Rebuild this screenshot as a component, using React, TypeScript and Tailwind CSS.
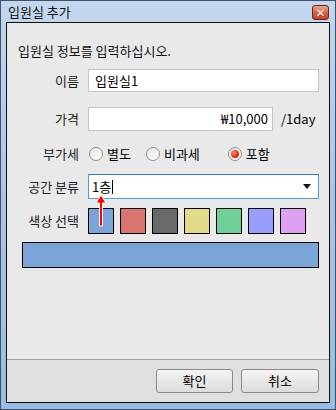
import React from "react";

const font = { fontFamily: '"Noto Sans CJK KR", "Noto Sans", sans-serif' };

const swatches = ["#7ba4d8", "#db7371", "#696969", "#e2dc8a", "#6fd09a", "#9b9dfd", "#dea0f0"];

function Radio({ checked, label }: { checked?: boolean; label: string }) {
  return (
    <div className="flex items-center gap-[4px]">
      <span className="flex h-[14px] w-[14px] items-center justify-center rounded-full border border-[#8e8f8f] bg-gradient-to-br from-[#e6e6e6] to-white">
        {checked && (
          <span className="h-[8px] w-[8px] rounded-full bg-[radial-gradient(circle_at_35%_35%,#ff8a70,#e21c0a_70%)]" />
        )}
      </span>
      <span>{label}</span>
    </div>
  );
}

function Label({ children }: { children: React.ReactNode }) {
  return <div className="w-[81px] shrink-0 pr-[9px] text-right text-[#222]">{children}</div>;
}

export default function App() {
  return (
    <div
      style={font}
      className="flex h-[410px] w-[336px] flex-col border border-[#3f526b] bg-gradient-to-b from-[#c3d8ef] via-[#aac5e5] to-[#9cbbe0] px-[5px] pb-[6px] text-[13px] leading-[16px] text-black"
    >
      {/* title bar */}
      <div className="flex h-[21px] shrink-0 items-center justify-between pl-[2px] pr-[1px]">
        <span className="text-[#111]">입원실 추가</span>
        <span className="mt-[2px] flex h-[15px] w-[17px] items-center justify-center rounded-[3px] border border-[#6b2618] bg-gradient-to-b from-[#e8a595] via-[#d2644c] to-[#c4401f] text-[10px] font-bold leading-none text-white">
          ×
        </span>
      </div>

      {/* client area */}
      <div className="relative flex flex-1 flex-col border border-[#101010] bg-[#e9e9e9]">
        <div className="flex flex-1 flex-col pr-[10px] pt-[20px]">
          <div className="h-[16px] pl-[11px] text-[#111]">입원실 정보를 입력하십시오.</div>

          <div className="mt-[10px] flex items-center">
            <Label>이름</Label>
            <div className="flex h-[23px] flex-1 items-center border border-[#c5c5c5] bg-white px-[6px]">입원실1</div>
          </div>

          <div className="mt-[15px] flex items-center">
            <Label>가격</Label>
            <div className="flex h-[24px] w-[185px] items-center justify-end border border-[#c5c5c5] bg-white px-[4px]">
              ₩10,000
            </div>
            <span className="ml-[8px]">/1day</span>
          </div>

          <div className="mt-[15px] flex h-[16px] items-center">
            <Label>부가세</Label>
            <div className="ml-[1px] flex items-center">
              <Radio label="별도" />
              <div className="ml-[15px]">
                <Radio label="비과세" />
              </div>
              <div className="ml-[28px]">
                <Radio checked label="포함" />
              </div>
            </div>
          </div>

          <div className="mt-[12px] flex items-center">
            <Label>공간 분류</Label>
            <div className="flex h-[25px] flex-1 items-center justify-between border border-[#569ad6] border-t-[#3d7bad] bg-white pl-[3px] pr-[7px]">
              <span className="flex items-center">
                1층<span className="ml-[1px] h-[14px] w-[1px] bg-black" />
              </span>
              <svg width="8" height="5" viewBox="0 0 8 5">
                <path d="M0 0h8L4 5z" fill="#111" />
              </svg>
            </div>
          </div>

          <div className="mt-[9px] flex items-center">
            <Label>색상 선택</Label>
            <div className="flex gap-[6px]">
              {swatches.map((c) => (
                <div key={c} className="h-[26px] w-[26px] border border-black" style={{ backgroundColor: c }} />
              ))}
            </div>
          </div>

          <div className="ml-[15px] mt-[8px] h-[26px] border border-black bg-[#7ba4d8]" />
        </div>

        {/* footer */}
        <div className="flex h-[43px] shrink-0 items-start justify-end gap-[8px] border-t border-[#a0a0a0] bg-[#e0e0e0] pr-[10px] pt-[9px]">
          <button className="h-[24px] w-[77px] rounded-[3px] border border-[#8a8a8a] bg-gradient-to-b from-[#f4f4f4] to-[#dcdcdc]">
            확인
          </button>
          <button className="h-[24px] w-[78px] rounded-[3px] border border-[#8a8a8a] bg-gradient-to-b from-[#f4f4f4] to-[#dcdcdc]">
            취소
          </button>
        </div>

        {/* red arrow pointing at the caret */}
        <svg className="absolute left-[88px] top-[171px]" width="12" height="34" viewBox="0 0 12 34">
          <path d="M6 1 L11 9 H7.5 V32 H4.5 V9 H1 Z" fill="#ff0000" stroke="#fff" strokeWidth="1" />
        </svg>
      </div>
    </div>
  );
}
